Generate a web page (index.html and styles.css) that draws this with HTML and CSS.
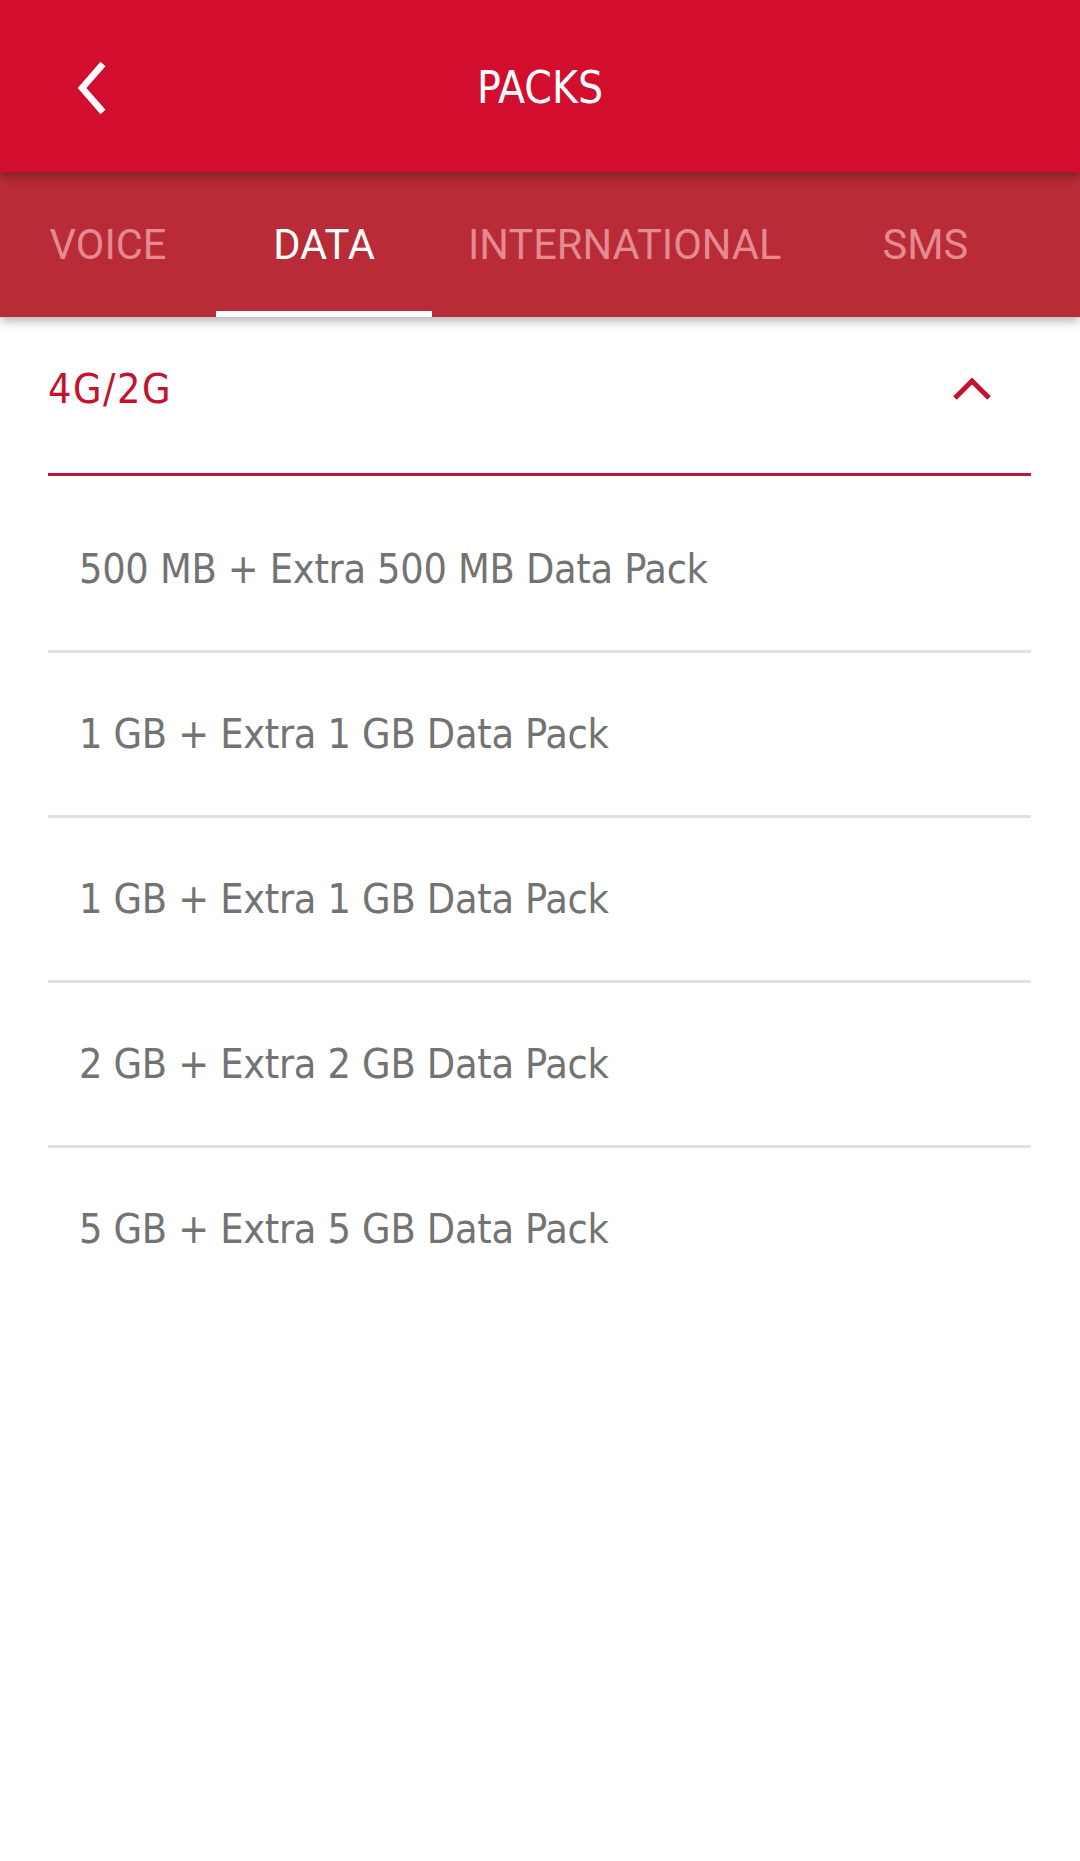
FILE: index.html
```html
<!DOCTYPE html>
<html lang="en">
  <head>
    <meta charset="UTF-8" />
    <meta name="viewport" content="width=device-width, initial-scale=1.0" />
    <title>Packs</title>
    <link rel="stylesheet" href="styles.css">
  </head>
  <body>
    <header class="appbar">
      <button class="voltar" aria-label="Back">
        <svg width="36" height="56" viewBox="0 0 36 56">
          <polyline points="27,4 6,28 27,52" fill="none" stroke="#fff" stroke-width="6.5" />
        </svg>
      </button>
      <h1 class="titulo">PACKS</h1>
      <span></span>
    </header>

    <nav class="abas">
      <div class="aba">VOICE</div>
      <div class="aba ativa">DATA</div>
      <div class="aba">INTERNATIONAL</div>
      <div class="aba">SMS</div>
    </nav>

    <section class="grupo">
      <div class="grupo-topo">
        <span class="grupo-nome">4G/2G</span>
        <svg class="seta" width="44" height="30" viewBox="0 0 44 30">
          <polyline points="5,24 22,7 39,24" fill="none" stroke="#c4122f" stroke-width="5" />
        </svg>
      </div>

      <ul class="lista">
        <li>500 MB + Extra 500 MB Data Pack</li>
        <li>1 GB + Extra 1 GB Data Pack</li>
        <li>1 GB + Extra 1 GB Data Pack</li>
        <li>2 GB + Extra 2 GB Data Pack</li>
        <li>5 GB + Extra 5 GB Data Pack</li>
      </ul>
    </section>
  </body>
</html>
```

FILE: styles.css
```css
body {
  margin: 0;
  background: #fff;
  font-family: "DejaVu Sans Condensed", "DejaVu Sans", sans-serif;
}
.appbar {
  height: 172px;
  background-color: #d30d2e;
  display: grid;
  grid-template-columns: 1fr auto 1fr;
  align-items: center;
  position: relative;
  z-index: 2;
  box-shadow: 0 4px 10px rgba(0, 0, 0, 0.35);
}
.voltar {
  justify-self: start;
  margin-left: 76px;
  margin-top: 3px;
  padding: 0;
  border: none;
  background: none;
  display: flex;
}
.titulo {
  margin: 3px 0 0 0;
  color: #fff;
  font-weight: normal;
  font-size: 44px;
}
.abas {
  height: 145px;
  background-color: #b92b37;
  display: flex;
  position: relative;
  z-index: 1;
  box-shadow: 0 4px 10px rgba(0, 0, 0, 0.3);
}
.aba {
  min-width: 216px;
  box-sizing: border-box;
  padding: 0 36px;
  display: flex;
  align-items: center;
  justify-content: center;
  font-family: Roboto, sans-serif;
  font-size: 41.6px;
  color: #e48a91;
  position: relative;
}
.aba.ativa {
  color: #fff;
}
.aba.ativa::after {
  content: "";
  position: absolute;
  left: 0;
  right: 0;
  bottom: 0;
  height: 6px;
  background: #fff;
}
.grupo {
  margin: 0 49px 0 48px;
}
.grupo-topo {
  height: 144px;
  padding-bottom: 12px;
  border-bottom: 3px solid #b8173a;
  display: flex;
  align-items: center;
  justify-content: space-between;
}
.grupo-nome {
  color: #c4122f;
  font-size: 41px;
  letter-spacing: 1.5px;
}
.seta {
  margin-right: 37px;
}
.lista {
  list-style: none;
  margin: 0;
  padding: 12px 0 0 0;
}
.lista li {
  height: 162px;
  display: flex;
  align-items: center;
  padding-left: 31px;
  color: #737373;
  font-size: 41px;
  letter-spacing: -0.3px;
  border-bottom: 3px solid #e1e1e1;
}
.lista li:last-child {
  border-bottom: none;
}
```
